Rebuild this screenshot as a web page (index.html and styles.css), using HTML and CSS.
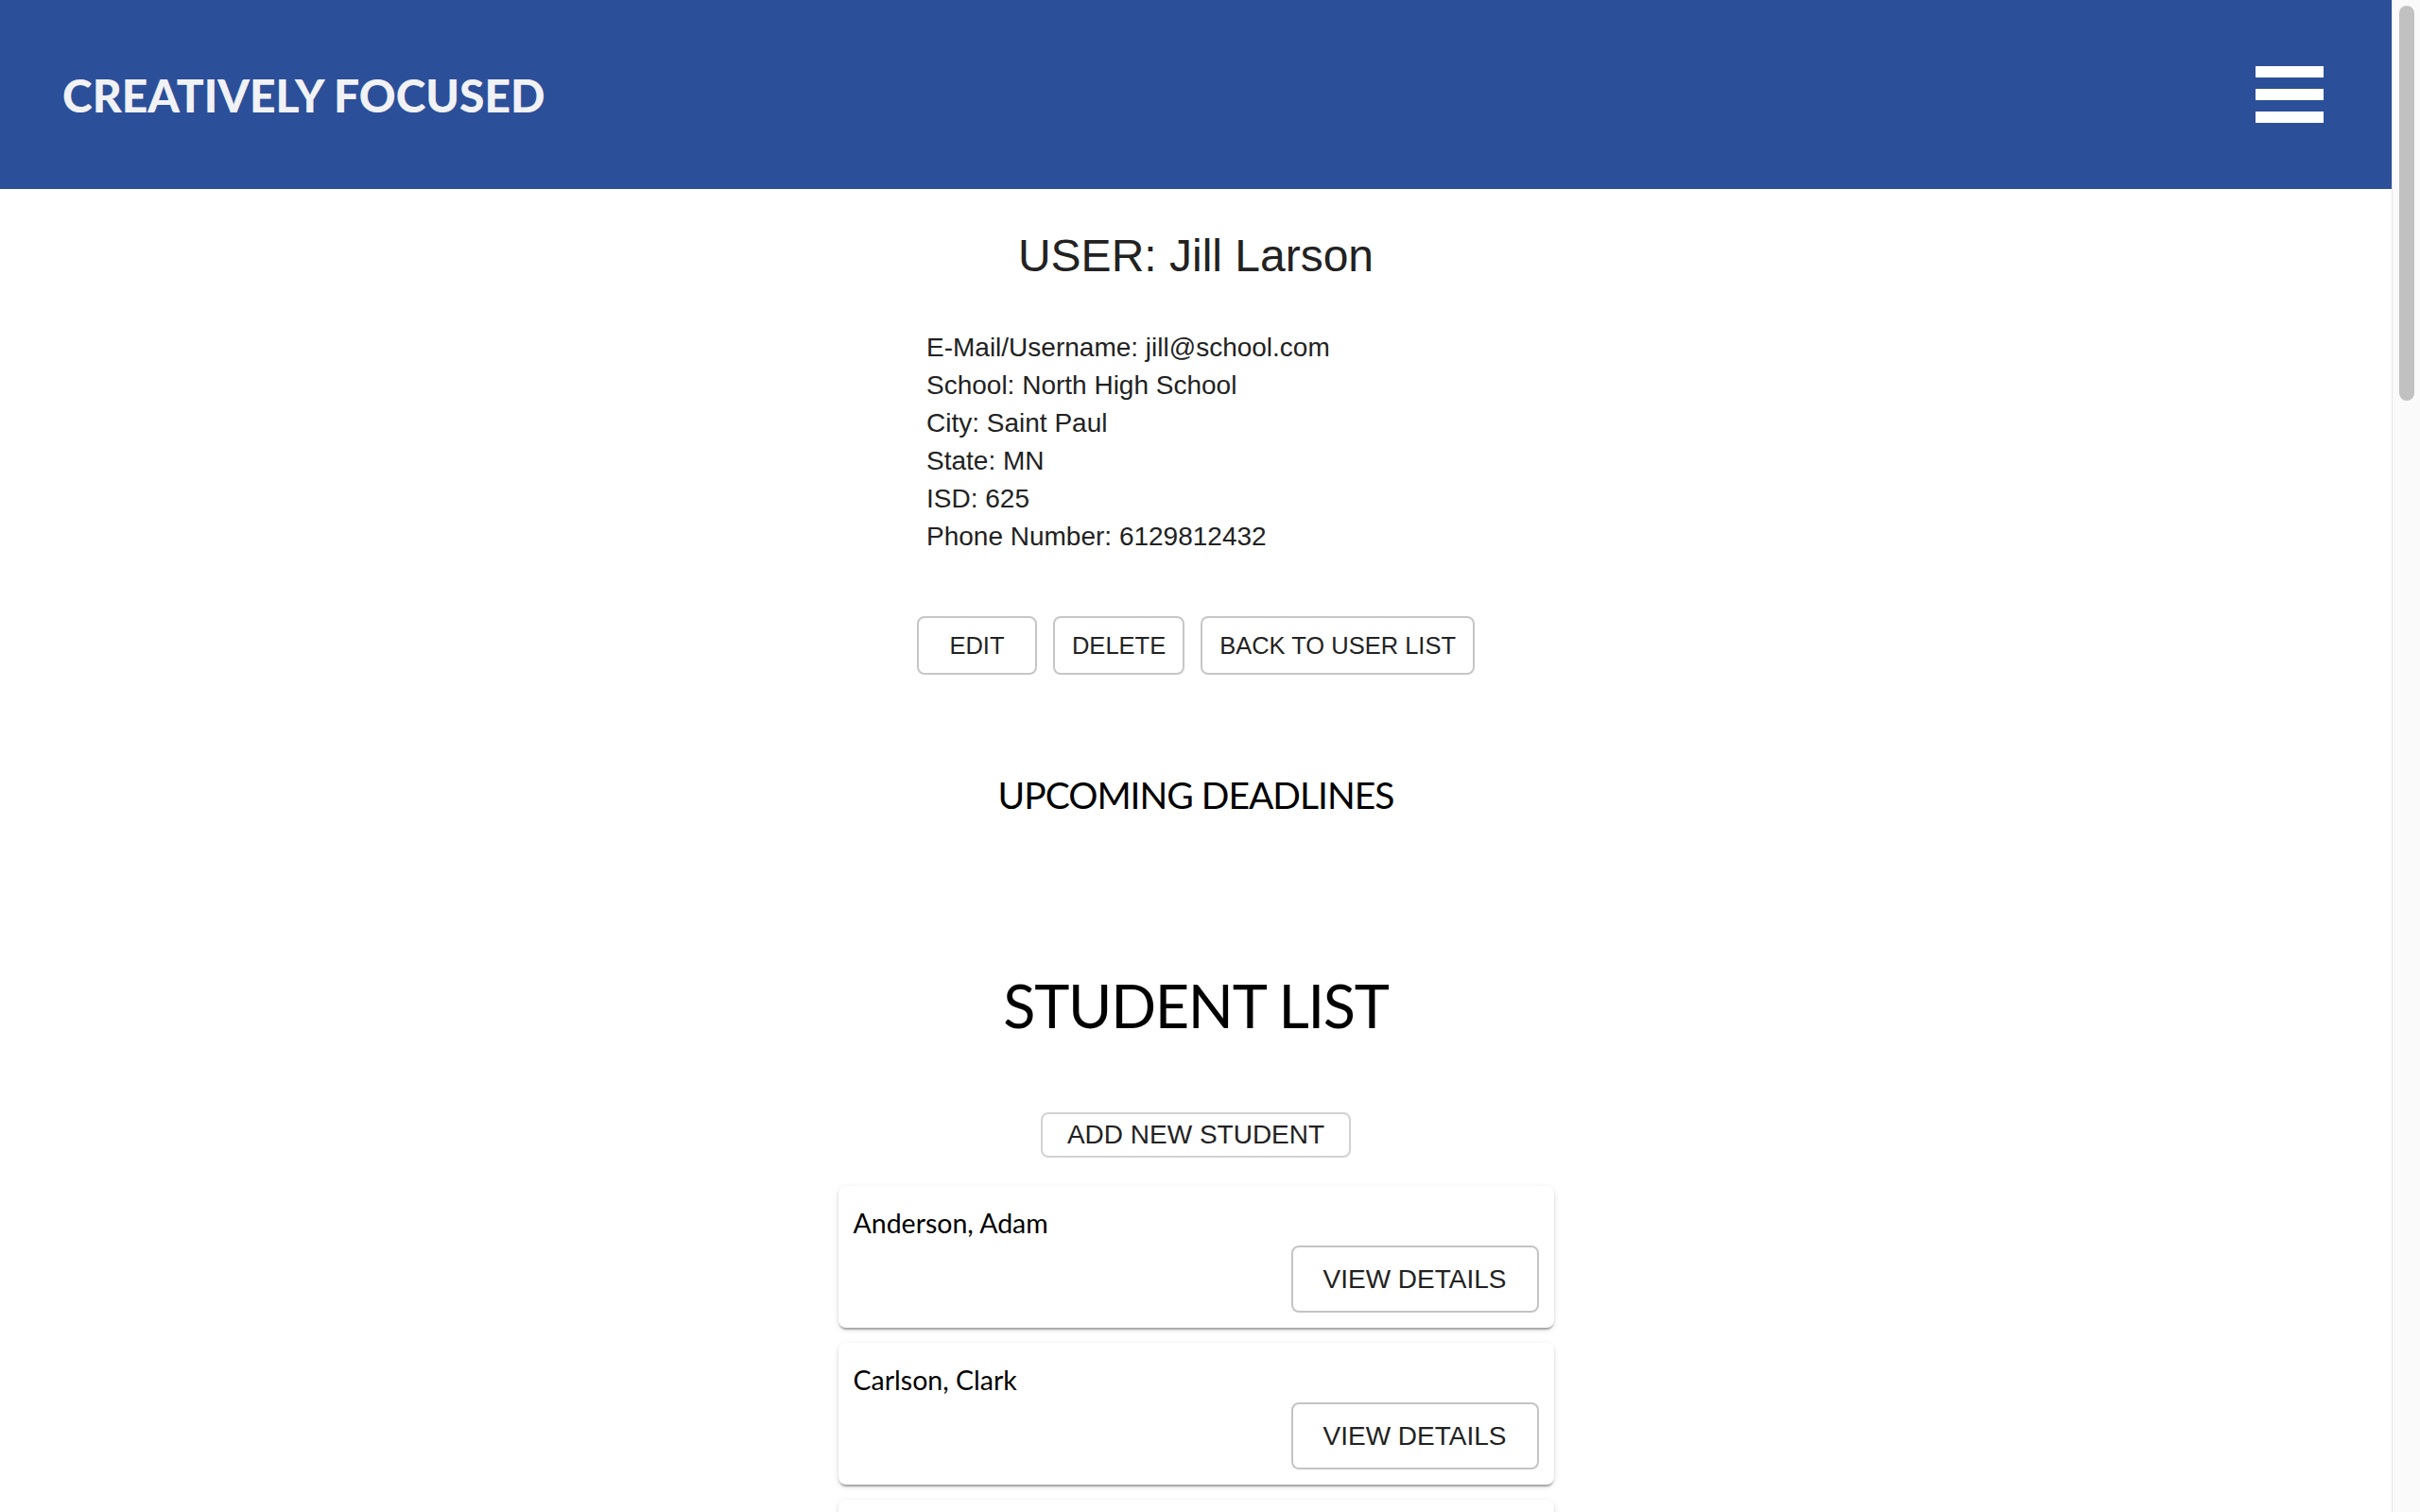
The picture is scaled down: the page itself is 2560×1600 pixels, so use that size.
FILE: index.html
```html
<!DOCTYPE html>
<html lang="en">
<head>
<meta charset="utf-8">
<title>Creatively Focused – User</title>
<link rel="stylesheet" href="styles.css">
</head>
<body>
<div class="app">
  <header class="topbar">
    <div class="logo">CREATIVELY FOCUSED</div>
    <button class="menu-btn" aria-label="Menu">
      <span class="bar"></span><span class="bar"></span><span class="bar"></span>
    </button>
  </header>
  <main class="page">
    <h1 class="user-title">USER: Jill Larson</h1>
    <div class="user-info">
      <div>E-Mail/Username: jill@school.com</div>
      <div>School: North High School</div>
      <div>City: Saint Paul</div>
      <div>State: MN</div>
      <div>ISD: 625</div>
      <div>Phone Number: 6129812432</div>
    </div>
    <div class="actions">
      <button class="btn btn-small">EDIT</button>
      <button class="btn btn-small">DELETE</button>
      <button class="btn btn-small">BACK TO USER LIST</button>
    </div>
    <h2 class="deadlines-title">UPCOMING DEADLINES</h2>
    <div class="deadlines"></div>
    <h2 class="students-title">STUDENT LIST</h2>
    <button class="btn btn-add">ADD NEW STUDENT</button>
    <div class="student-list">
      <div class="card"><div class="student-name">Anderson, Adam</div><button class="btn btn-medium">VIEW DETAILS</button></div>
      <div class="card"><div class="student-name">Carlson, Clark</div><button class="btn btn-medium">VIEW DETAILS</button></div>
      <div class="card"><div class="student-name">Erickson, Emma</div><button class="btn btn-medium">VIEW DETAILS</button></div>
    </div>
  </main>
</div>
<div class="scrollbar" aria-hidden="true"><div class="scroll-thumb"></div></div>
</body>
</html>
```
FILE: styles.css
```css
html, body {
  margin: 0;
  padding: 0;
  background: #ffffff;
}

body {
  font-family: "Liberation Sans", Arial, sans-serif;
  color: #222222;
  display: flex;
  align-items: flex-start;
}

.app {
  flex: 1;
  min-width: 0;
}

.scrollbar {
  flex: none;
  position: sticky;
  top: 0;
  width: 30px;
  height: 100vh;
  box-sizing: border-box;
  background: #fafafa;
  border-left: 1px solid #e6e6e6;
  padding: 6px 6px 0 7px;
}

.scroll-thumb {
  height: 418px;
  background: #c1c1c1;
  border-radius: 8px;
}

.topbar {
  height: 200px;
  background: #2c4f99;
  display: flex;
  align-items: center;
  justify-content: space-between;
  padding: 0 72px 0 66px;
}

.logo {
  font-family: Lato, "Noto Sans", sans-serif;
  font-weight: 900;
  font-size: 48px;
  color: #f1f2f6;
}

.menu-btn {
  width: 72px;
  height: 60px;
  padding: 0;
  border: 0;
  background: transparent;
  display: flex;
  flex-direction: column;
  justify-content: space-between;
}

.bar {
  display: block;
  width: 72px;
  height: 12px;
  background: #ffffff;
}

.page {
  display: flex;
  flex-direction: column;
  align-items: center;
}

.user-title {
  margin: 43px 0 0;
  font-size: 48px;
  font-weight: 400;
  line-height: 55px;
  color: #222222;
}

.user-info {
  width: 570px;
  margin-top: 50px;
  font-size: 28px;
  line-height: 40px;
  color: #222222;
}

.actions {
  display: flex;
  gap: 17px;
  margin-top: 64px;
}

.btn {
  font-family: "Liberation Sans", Arial, sans-serif;
  background: #ffffff;
  color: #222222;
  border: 2px solid #c6c6c6;
  border-radius: 8px;
  cursor: pointer;
}

.btn-small {
  font-size: 25.5px;
  line-height: 46px;
  padding: 6px 18px;
  min-width: 127px;
}

.deadlines-title {
  margin: 95px 0 0;
  font-family: Lato, "Noto Sans", sans-serif;
  font-weight: 400;
  font-size: 39px;
  line-height: 64px;
  letter-spacing: -1px;
  color: #000000;
}

.deadlines {
  height: 149px;
}

.students-title {
  margin: 0;
  font-family: Lato, "Noto Sans", sans-serif;
  font-weight: 400;
  font-size: 63px;
  line-height: 84px;
  letter-spacing: -1.3px;
  color: #000000;
}

.btn-add {
  margin-top: 71px;
  font-size: 28px;
  line-height: 36px;
  padding: 4px 26px;
  color: #222222;
  border-color: #d2d2d2;
}

.student-list {
  margin-top: 30px;
  width: 757px;
  display: flex;
  flex-direction: column;
  gap: 16px;
}

.card {
  background: #ffffff;
  border-radius: 8px;
  padding: 16px 16px 16px;
  display: flex;
  flex-direction: column;
  box-shadow: 0 4px 2px -2px rgba(0, 0, 0, 0.2), 0 2px 2px 0 rgba(0, 0, 0, 0.14), 0 2px 6px 0 rgba(0, 0, 0, 0.12);
}

.student-name {
  font-family: Lato, "Noto Sans", sans-serif;
  font-size: 28.5px;
  line-height: 47px;
  color: #000000;
}

.btn-medium {
  align-self: flex-end;
  font-size: 28px;
  line-height: 47px;
  padding: 10px 32px;
  border-color: #c4c4c4;
}
```
